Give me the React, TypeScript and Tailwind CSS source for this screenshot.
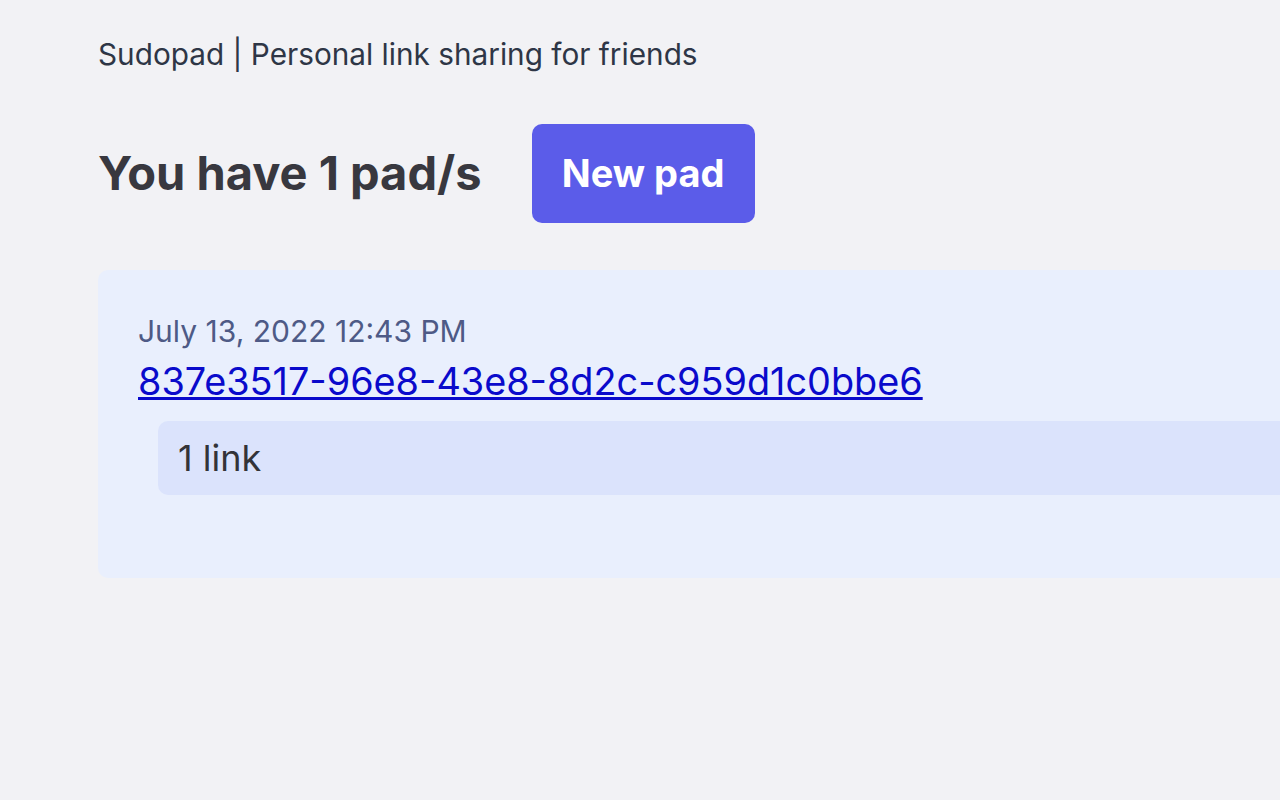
export default function App() {
  return (
    <div className="min-h-screen w-full overflow-hidden bg-[#f2f2f5] font-['Inter',sans-serif]">
      <main className="px-[98px] pt-[34px]">
        <p className="text-[29.75px] leading-[40px] text-[#2e3646]">
          Sudopad | Personal link sharing for friends
        </p>

        <div className="mt-[50px] flex items-center gap-[50px]">
          <h1 className="text-[47px] font-bold text-[#38383f]">You have 1 pad/s</h1>
          <button className="flex h-[99px] w-[223px] items-center justify-center rounded-[10px] bg-[#5b5ce9] text-[38px] font-bold text-white">
            New pad
          </button>
        </div>

        <div className="mt-[47px] w-[1300px] rounded-[10px] bg-[#e9effd] pb-[83px] pl-[40px] pt-[41px]">
          <div className="text-[30px] leading-[40px] text-[#4e5a86]">July 13, 2022 12:43 PM</div>
          <a href="#" className="mt-[6px] block text-[37.8px] leading-[48px] text-[#0a0acb] underline">
            837e3517-96e8-43e8-8d2c-c959d1c0bbe6
          </a>
          <div className="ml-[20px] mt-[16px] flex h-[74px] items-center rounded-[10px] bg-[#dbe3fc] pl-[20px] text-[36px] text-[#333338]">
            1 link
          </div>
        </div>
      </main>
    </div>
  );
}
